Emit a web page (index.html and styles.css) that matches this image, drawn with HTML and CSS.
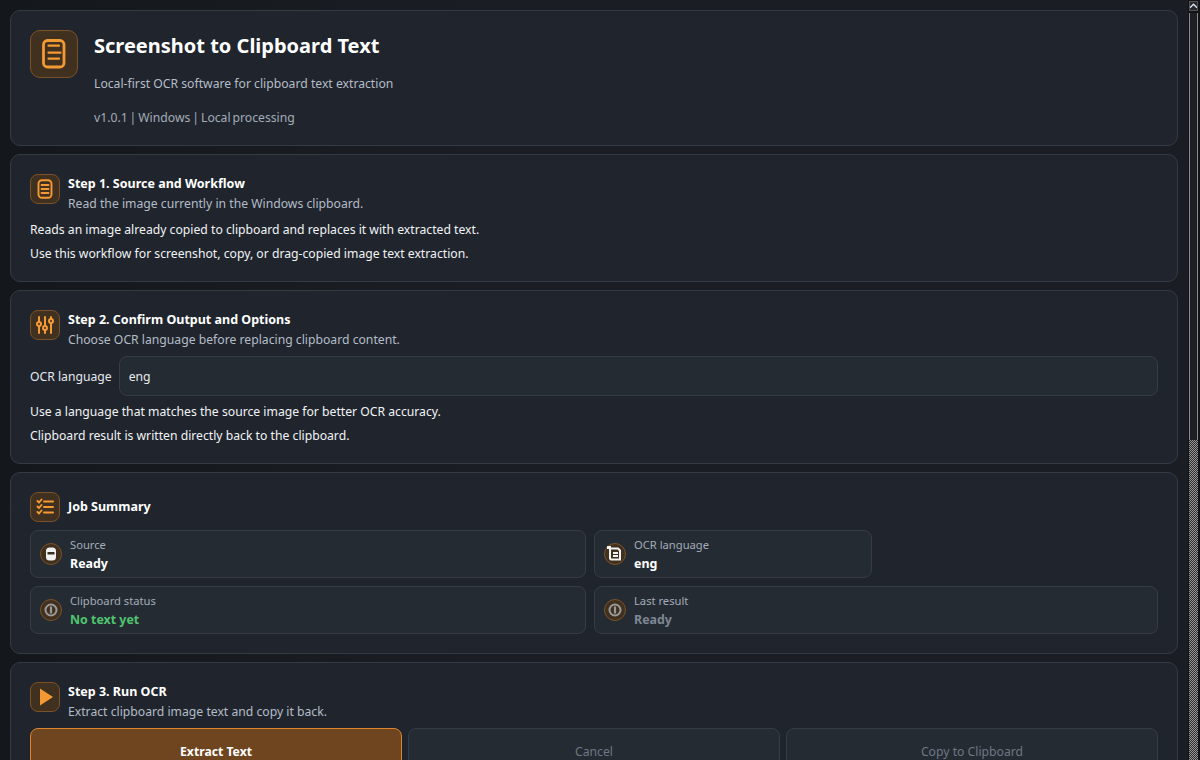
FILE: index.html
```html
<!DOCTYPE html>
<html lang="en">
<head>
    <meta charset="UTF-8" />
    <title>Screenshot to Clipboard Text</title>
    <link rel="stylesheet" href="styles.css">
</head>
<body>
    <div class="page">
        <!-- Header -->
        <div class="card header">
            <div class="icon icon-large">
                <svg width="28" height="32" viewBox="0 0 28 32" fill="none" stroke="#f39a35" stroke-linecap="round">
                    <rect x="3.500" y="2.500" width="20.500" height="26.500" rx="4" stroke-width="2.800" />
                    <path d="M8.500 7.700h10.500M8.500 14.700h12M8.500 20.700h10.500" stroke-width="2.200" />
                </svg>
            </div>
            <div class="header-text">
                <h1>Screenshot to Clipboard Text</h1>
                <p class="muted">Local-first OCR software for clipboard text extraction</p>
                <p class="muted dim">v1.0.1 | Windows | Local processing</p>
            </div>
        </div>

        <!-- Step 1 -->
        <div class="card step-one">
            <div class="section-head">
                <div class="icon">
                    <svg width="18" height="20" viewBox="0 0 18 20" fill="none" stroke="#f39a35" stroke-linecap="round">
                        <rect x="2.500" y="1.200" width="13" height="17.600" rx="3.500" stroke-width="1.900" />
                        <path d="M5.500 6h7M5.500 10h7M5.500 14h7" stroke-width="1.900" />
                    </svg>
                </div>
                <div>
                    <h2>Step 1. Source and Workflow</h2>
                    <p class="muted">Read the image currently in the Windows clipboard.</p>
                </div>
            </div>
            <p class="line">Reads an image already copied to clipboard and replaces it with extracted text.</p>
            <p class="line">Use this workflow for screenshot, copy, or drag-copied image text extraction.</p>
        </div>

        <!-- Step 2 -->
        <div class="card step-two">
            <div class="section-head">
                <div class="icon">
                    <svg width="20" height="20" viewBox="0 0 20 20" fill="none" stroke="#f39a35" stroke-width="2" stroke-linecap="round">
                        <path d="M4 2v5M4 11v7M10 2v9M10 15v3M16 2v2M16 8v10" />
                        <circle cx="4" cy="9" r="2" />
                        <circle cx="10" cy="13" r="2" />
                        <circle cx="16" cy="6" r="2" />
                    </svg>
                </div>
                <div>
                    <h2>Step 2. Confirm Output and Options</h2>
                    <p class="muted">Choose OCR language before replacing clipboard content.</p>
                </div>
            </div>
            <div class="field">
                <label for="lang">OCR language</label>
                <input id="lang" type="text" value="eng" />
            </div>
            <p class="line">Use a language that matches the source image for better OCR accuracy.</p>
            <p class="line">Clipboard result is written directly back to the clipboard.</p>
        </div>

        <!-- Job Summary -->
        <div class="card summary">
            <div class="section-head center">
                <div class="icon">
                    <svg width="18" height="18" viewBox="0 0 18 18" fill="none" stroke="#f39a35" stroke-linecap="round" stroke-linejoin="round">
                        <path d="M1.500 3l1.500 1.500L5.500 1.500M1.500 8.500L3 10l2.500-3M1.500 14l1.500 1.500 2.500-3" stroke-width="1.900" />
                        <path d="M8 3.500h9M8 9h9M8 14.500h9" stroke-width="2" />
                    </svg>
                </div>
                <h2>Job Summary</h2>
            </div>
            <div class="tiles">
                <div class="tile">
                    <div class="dot">
                        <svg width="12" height="14" viewBox="0 0 12 14">
                            <rect x="1" y="0.500" width="10" height="13" rx="3.500" fill="#f1f1f1" />
                            <rect x="2.500" y="5" width="7" height="2.500" fill="#3a2e22" />
                        </svg>
                    </div>
                    <div>
                        <div class="tile-label">Source</div>
                        <div class="tile-value">Ready</div>
                    </div>
                </div>
                <div class="tile">
                    <div class="dot">
                        <svg width="18" height="18" viewBox="0 0 18 18" fill="none" stroke="#f1f1f1" stroke-width="2">
                            <path d="M1 1h4v3H1z" fill="#f1f1f1" stroke="none" />
                            <path d="M4 3.500h8l2 2v9h-9l-1-1z" />
                            <path d="M7 8h5M7 11h5" />
                        </svg>
                    </div>
                    <div>
                        <div class="tile-label">OCR language</div>
                        <div class="tile-value">eng</div>
                    </div>
                </div>
                <div class="tile">
                    <div class="dot">
                        <svg width="14" height="14" viewBox="0 0 14 14" fill="none" stroke="#9a9a9a" stroke-width="2">
                            <circle cx="7" cy="7" r="5.500" />
                            <path d="M7 3.500v7" stroke-width="2.200" />
                        </svg>
                    </div>
                    <div>
                        <div class="tile-label">Clipboard status</div>
                        <div class="tile-value green">No text yet</div>
                    </div>
                </div>
                <div class="tile tile-wide">
                    <div class="dot">
                        <svg width="14" height="14" viewBox="0 0 14 14" fill="none" stroke="#9a9a9a" stroke-width="2">
                            <circle cx="7" cy="7" r="5.500" />
                            <path d="M7 3.500v7" stroke-width="2.200" />
                        </svg>
                    </div>
                    <div>
                        <div class="tile-label">Last result</div>
                        <div class="tile-value grey">Ready</div>
                    </div>
                </div>
            </div>
        </div>

        <!-- Step 3 -->
        <div class="card step-three">
            <div class="section-head">
                <div class="icon">
                    <svg width="17" height="18" viewBox="0 0 17 18">
                        <path d="M3 0.500L16 9 3 17.500z" fill="#f39a35" />
                    </svg>
                </div>
                <div>
                    <h2>Step 3. Run OCR</h2>
                    <p class="muted">Extract clipboard image text and copy it back.</p>
                </div>
            </div>
            <div class="buttons">
                <button class="primary">Extract Text</button>
                <button disabled>Cancel</button>
                <button disabled>Copy to Clipboard</button>
            </div>
        </div>
    </div>

    <!-- Scrollbar -->
    <div class="scrollbar">
        <div class="scroll-up">
            <svg width="8" height="6" viewBox="0 0 8 6"><path d="M0 5l4-4 4 4" fill="none" stroke="#dfe8f5" stroke-width="1.500" /></svg>
        </div>
        <div class="scroll-track"></div>
        <div class="scroll-thumb"></div>
    </div>
</body>
</html>
```

FILE: styles.css
```css
* {
    box-sizing: border-box;
}
html,
body {
    margin: 0;
    height: 760px;
    overflow: hidden;
}
body {
    display: flex;
    font-family: "Noto Sans", sans-serif;
    font-size: 12.2px;
    color: #f1f3f6;
    background: linear-gradient(90deg, #14171b, #1a1e24 40%, #1a1e24);
}
h1,
h2,
p {
    margin: 0;
}
.page {
    width: 1188px;
    flex: none;
    padding: 10px 10px 0;
    display: flex;
    flex-direction: column;
    gap: 8px;
}
.card {
    flex: none;
    background-color: #20252d;
    border: 1px solid #343a44;
    border-radius: 10px;
    padding: 19px;
}
/* Header */
.header {
    height: 136px;
    display: flex;
    gap: 16px;
}
.header-text h1 {
    font-size: 20px;
    line-height: 32px;
    margin-bottom: 12px;
    font-weight: 700;
    color: #fff;
}
.header-text .muted {
    line-height: 20px;
    margin-bottom: 14px;
}
.muted {
    color: #b4bcc8;
    line-height: 20px;
}
.dim {
    color: #a3acb8;
    word-spacing: -1.200px;
}
/* Icons */
.icon {
    flex: none;
    width: 30px;
    height: 30px;
    display: flex;
    align-items: center;
    justify-content: center;
    background-color: #40301f;
    border: 1px solid #7d5126;
    border-radius: 8px;
}
.icon-large {
    width: 48px;
    height: 48px;
    border-radius: 10px;
}
.dot {
    flex: none;
    width: 22px;
    height: 22px;
    display: flex;
    align-items: center;
    justify-content: center;
    background-color: #40301f;
    border: 1px solid #7d5126;
    border-radius: 50%;
}
/* Sections */
.step-one {
    height: 128px;
}
.step-two {
    height: 174px;
}
.summary {
    height: 182px;
}
.step-three {
    height: 110px;
}
.section-head {
    display: flex;
    gap: 8px;
    margin-bottom: 4px;
}
.section-head.center {
    align-items: center;
    margin-bottom: 8px;
}
h2 {
    font-size: 12.5px;
    line-height: 20px;
    font-weight: 700;
    color: #fff;
}
.line {
    line-height: 24px;
}
.field {
    display: flex;
    align-items: center;
    gap: 7px;
    margin: 6px 0 4px;
}
.field label {
    color: #e4e8ee;
}
.field input {
    flex: 1;
    height: 40px;
    padding: 0 9px;
    font: inherit;
    color: #e8ebf0;
    background-color: #252b33;
    border: 1px solid #363c47;
    border-radius: 8px;
}
/* Job summary tiles */
.tiles {
    display: grid;
    grid-template-columns: 556px 278px 1fr;
    grid-auto-rows: 48px;
    gap: 8px;
}
.tile {
    display: flex;
    align-items: center;
    gap: 8px;
    padding: 0 9px;
    background-color: #252b33;
    border: 1px solid #363c47;
    border-radius: 8px;
}
.tile:nth-child(3) {
    grid-column: 1;
}
.tile-wide {
    grid-column: 2 / span 2;
}
.tile-label {
    font-size: 11.200px;
    line-height: 16px;
    margin-top: 2px;
    color: #a3acb8;
}
.tile-value {
    font-size: 12.400px;
    font-weight: 700;
    line-height: 20px;
    margin-top: 1px;
    color: #fff;
}
.green {
    color: #4fc66f;
}
.grey {
    color: #7e8794;
}
/* Buttons */
.buttons {
    display: flex;
    gap: 6px;
    margin-top: 6px;
}
.buttons button {
    flex: 1;
    height: 46px;
    padding: 0;
    font: inherit;
    color: #6f7784;
    background-color: #252b33;
    border: 1px solid #363c47;
    border-radius: 8px;
}
.buttons .primary {
    font-weight: 700;
    color: #fff;
    background-color: #6f451f;
    border-color: #d8852c;
}
/* Scrollbar */
.scrollbar {
    width: 12px;
    flex: none;
    padding: 1px 2px 0 1px;
    display: flex;
    flex-direction: column;
    background-color: #111316;
}
.scroll-up {
    height: 10px;
    display: flex;
    align-items: center;
    justify-content: center;
    background-color: #24282e;
    border: 1px solid #555;
    margin-bottom: 2px;
}
.scroll-track {
    height: 427px;
    background-color: #1c1f24;
    border-left: 1px solid #8a8a8a;
    border-right: 1px solid #8a8a8a;
}
.scroll-thumb {
    flex: 1;
    background-color: #2a2a2a;
    background-image: conic-gradient(#9a9a9a 25%, #2a2a2a 0 50%, #9a9a9a 0 75%, #2a2a2a 0);
    background-size: 2px 2px;
}
```
